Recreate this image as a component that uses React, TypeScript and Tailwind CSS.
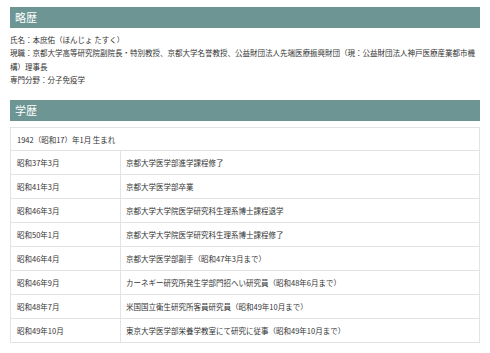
const history: [string, string][] = [
  ['昭和37年3月', '京都大学医学部進学課程修了'],
  ['昭和41年3月', '京都大学医学部卒業'],
  ['昭和46年3月', '京都大学大学院医学研究科生理系博士課程退学'],
  ['昭和50年1月', '京都大学大学院医学研究科生理系博士課程修了'],
  ['昭和46年4月', '京都大学医学部副手（昭和47年3月まで）'],
  ['昭和46年9月', 'カーネギー研究所発生学部門招へい研究員（昭和48年6月まで）'],
  ['昭和48年7月', '米国国立衛生研究所客員研究員（昭和49年10月まで）'],
  ['昭和49年10月', '東京大学医学部栄養学教室にて研究に従事（昭和49年10月まで）'],
];

function SectionHeader({ title }: { title: string }) {
  return (
    <div className="h-[21px] bg-[#6c9593] flex items-center px-[5px] text-white text-[11px] leading-none">
      {title}
    </div>
  );
}

export default function App() {
  return (
    <div
      className="w-[490px] h-[353px] bg-white px-[10px] pt-[7px] text-[#333] overflow-hidden"
      style={{ fontFamily: '"Noto Sans CJK JP", "Noto Sans", sans-serif' }}
    >
      <SectionHeader title="略歴" />
      <div className="pt-[5px] text-[7.5px] leading-[13.3px]">
        <p>氏名：本庶佑（ほんじょ たすく）</p>
        <p>
          現職：京都大学高等研究院副院長・特別教授、京都大学名誉教授、公益財団法人先端医療振興財団（現：公益財団法人神戸医療産業都市機構）理事長
        </p>
        <p>専門分野：分子免疫学</p>
      </div>

      <div className="mt-[14px]">
        <SectionHeader title="学歴" />
      </div>

      <table className="mt-[6px] w-full border-collapse text-[7.5px] border border-[#e3e3e3]">
        <tbody>
          <tr className="h-[23px]">
            <td colSpan={2} className="border border-[#e3e3e3] px-[6px]">
              1942（昭和17）年1月 生まれ
            </td>
          </tr>
          {history.map(([date, text]) => (
            <tr key={date + text} className="h-[24px]">
              <td className="w-[110px] border border-[#e3e3e3] px-[6px]">{date}</td>
              <td className="border border-[#e3e3e3] px-[5px]">{text}</td>
            </tr>
          ))}
        </tbody>
      </table>
    </div>
  );
}
